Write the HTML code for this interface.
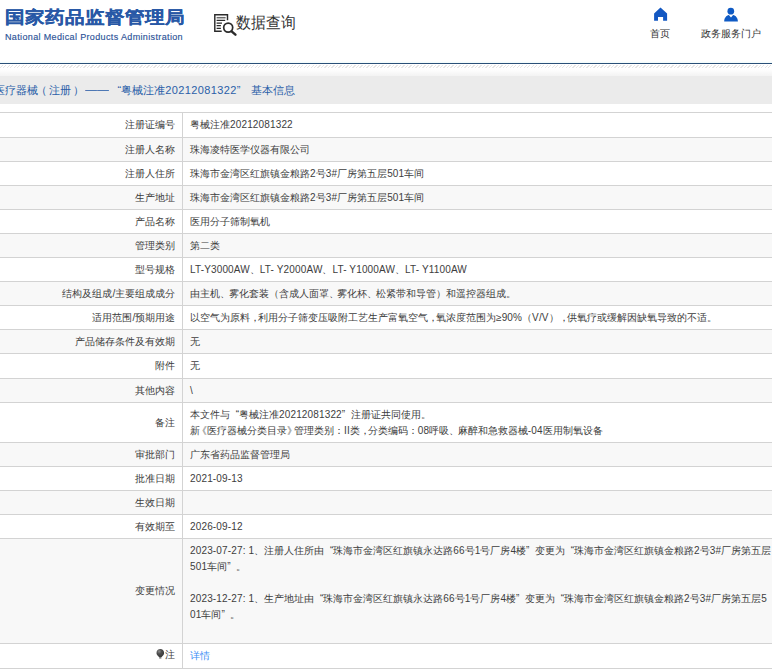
<!DOCTYPE html>
<html><head><meta charset="utf-8">
<style>
*{margin:0;padding:0;box-sizing:border-box}
html,body{width:772px;height:671px;overflow:hidden;background:#fff;font-family:"Liberation Sans",sans-serif;font-size:10px;color:#333}
.row{}
b,i{font-weight:normal;font-style:normal}
.logo-cn{position:absolute;left:5px;top:4px;font-size:19.8px;line-height:24px;font-weight:bold;color:#2858a6;white-space:nowrap;transform:scaleY(0.87);transform-origin:0 22px;-webkit-text-stroke:0.25px #2858a6}
.logo-en{position:absolute;left:5px;top:30.5px;font-size:9px;line-height:12px;letter-spacing:0.36px;color:#2d5398;white-space:nowrap;-webkit-text-stroke:0.15px #2d5398}
.sj{position:absolute;left:236px;top:12.5px;font-size:14.8px;line-height:20px;color:#333;white-space:nowrap;transform:scaleY(1.08);transform-origin:0 17px}
.nav{position:absolute;top:28px;font-size:10px;line-height:12px;color:#333;white-space:nowrap}
.bline{position:absolute;left:0;top:63px;width:772px;height:1px;background:#2a5078}
.hatch{position:absolute;left:0;top:64.5px;width:772px;height:3.8px;background:repeating-linear-gradient(135deg,#fff 0 1.5px,#e6e6e6 1.5px 2.47px)}
.cy{position:absolute;left:0;top:61px;width:772px;height:2px;background:linear-gradient(#fff,#eefafa)}
.grad{position:absolute;left:0;top:68.5px;width:772px;height:7.5px;background:linear-gradient(#fff,#f3f3f3)}
.title{position:absolute;left:-6px;top:76px;width:780px;height:28px;background:#ebebeb;color:#2a5ea8;font-size:11px;line-height:29px;white-space:nowrap}
.title .a{letter-spacing:0.4px}
.title .ql,.title .qr{width:11px}
.tpl,.tpr{display:inline-block;width:11px;white-space:nowrap}
.tpl{text-indent:-2px}
.tpr{text-indent:2px}
.dash{display:inline-block;position:relative;top:-1px;transform:scaleX(1.09);transform-origin:0 0}
.row{position:absolute;left:0;width:772px;border-top:1px solid #d3d3d3;border-bottom:1px solid #d3d3d3}
.lab{position:absolute;left:0;top:0;width:182px;padding-right:6.6px;text-align:right;display:flex;align-items:center;justify-content:flex-end;white-space:nowrap;color:#3d3d3d}
.val{position:absolute;left:182px;top:0;right:0;border-left:1px solid #d3d3d3;padding-left:7px;display:flex;align-items:center;white-space:nowrap;color:#3d3d3d;line-height:16px}
.a{letter-spacing:0.15px}
.ql,.qr{display:inline-block;width:9px;text-align:right}
.qr{text-align:left}
.bl,.br{display:inline-block;width:7px;overflow:visible;text-indent:-3px}
.br{text-indent:0}
.cm{display:inline-block;width:8px}
.dn{display:inline-block;width:8.5px}
.lnk{color:#3a8ef5}
.bulb{display:inline-block;vertical-align:-1px;margin-right:0.5px}
</style></head><body>
<div class="logo-cn">国家药品监督管理局</div>
<div class="logo-en">National Medical Products Administration</div>
<svg style="position:absolute;left:212px;top:12px" width="26" height="24" viewBox="0 0 26 24" fill="none" stroke="#2b2b2b">
<path d="M9.7 19.3H2.8V2.8H15.5V8.2" stroke-width="1.45"/>
<path d="M4.6 5.7H13.6" stroke="#6a6a6a" stroke-width="1.5"/>
<path d="M4.6 8.4H13.2M4.6 11.1H10M4.6 13.6H8.9M4.6 16.4H8.9" stroke-width="1.2"/>
<circle cx="16.2" cy="15.6" r="4.5" stroke-width="1.7"/>
<path d="M19.6 19.3L23.4 22.7" stroke-width="2.4" stroke-linecap="round"/>
</svg>
<div class="sj">数据查询</div>
<svg style="position:absolute;left:650px;top:4px" width="22" height="20" viewBox="650 4 22 20"><path d="M654.1 13.4L660.5 7.6L667.1 13.4V20.8H663.1V17.1H658V20.8H654.1Z" fill="#1458c2"/></svg>
<div class="nav" style="left:650px">首页</div>
<svg style="position:absolute;left:720px;top:4px" width="22" height="20" viewBox="0 0 22 20" fill="#0f5ac4"><circle cx="10.8" cy="7.2" r="3.35"/><path d="M4.2 17.6C4.2 14 6.3 11.5 8.9 11L11 13.4L13.1 11C15.7 11.5 17.9 14 17.9 17.6Z"/></svg>
<div class="nav" style="left:701px">政务服务门户</div>
<div class="cy"></div><div class="bline"></div>
<div class="hatch"></div>
<div class="grad"></div>
<div class="title">医疗器械<i class="tpl">（</i>注册<i class="tpr">）</i> <i class="dash">——</i> <i class="ql">“</i>粤械注准<b class="a">20212081322</b><i class="qr">”</i> 基本信息</div>
<div class="row" style="top:112px;height:26px;background:#fff"><div class="lab" style="height:24px"><div>注册证编号</div></div><div class="val" style="height:24px"><div>粤械注准<b class="a">20212081322</b></div></div></div>
<div class="row" style="top:137px;height:25px;background:#f8f8f8"><div class="lab" style="height:23px"><div>注册人名称</div></div><div class="val" style="height:23px"><div>珠海凌特医学仪器有限公司</div></div></div>
<div class="row" style="top:161px;height:25px;background:#fff"><div class="lab" style="height:23px"><div>注册人住所</div></div><div class="val" style="height:23px"><div>珠海市金湾区红旗镇金粮路<b class="a">2</b>号<b class="a">3#</b>厂房第五层<b class="a">501</b>车间</div></div></div>
<div class="row" style="top:185px;height:25px;background:#f8f8f8"><div class="lab" style="height:23px"><div>生产地址</div></div><div class="val" style="height:23px"><div>珠海市金湾区红旗镇金粮路<b class="a">2</b>号<b class="a">3#</b>厂房第五层<b class="a">501</b>车间</div></div></div>
<div class="row" style="top:209px;height:25px;background:#fff"><div class="lab" style="height:23px"><div>产品名称</div></div><div class="val" style="height:23px"><div>医用分子筛制氧机</div></div></div>
<div class="row" style="top:233px;height:25px;background:#f8f8f8"><div class="lab" style="height:23px"><div>管理类别</div></div><div class="val" style="height:23px"><div>第二类</div></div></div>
<div class="row" style="top:257px;height:25px;background:#fff"><div class="lab" style="height:23px"><div>型号规格</div></div><div class="val" style="height:23px"><div><b class="a">LT-Y3000AW</b>、<b class="a">LT- Y2000AW</b>、<b class="a">LT- Y1000AW</b>、<b class="a">LT- Y1100AW</b></div></div></div>
<div class="row" style="top:281px;height:25px;background:#f8f8f8"><div class="lab" style="height:23px"><div>结构及组成<b class="a">/</b>主要组成成分</div></div><div class="val" style="height:23px"><div>由主机<i class="dn">、</i>雾化套装（含成人面罩<i class="dn">、</i>雾化杯<i class="dn">、</i>松紧带和导管）和遥控器组成。</div></div></div>
<div class="row" style="top:305px;height:25px;background:#fff"><div class="lab" style="height:23px"><div>适用范围<b class="a">/</b>预期用途</div></div><div class="val" style="height:23px"><div>以空气为原料<i class="cm">，</i>利用分子筛变压吸附工艺生产富氧空气<i class="cm">，</i>氧浓度范围为<b class="a">≥90%</b>（<b class="a">V/V</b>）<i class="cm">，</i>供氧疗或缓解因缺氧导致的不适。</div></div></div>
<div class="row" style="top:329px;height:25px;background:#f8f8f8"><div class="lab" style="height:23px"><div>产品储存条件及有效期</div></div><div class="val" style="height:23px"><div>无</div></div></div>
<div class="row" style="top:353px;height:26px;background:#fff"><div class="lab" style="height:24px"><div>附件</div></div><div class="val" style="height:24px"><div>无</div></div></div>
<div class="row" style="top:378px;height:25px;background:#f8f8f8"><div class="lab" style="height:23px"><div>其他内容</div></div><div class="val" style="height:23px"><div><b class="a">\</b></div></div></div>
<div class="row" style="top:402px;height:41px;background:#fff"><div class="lab" style="height:39px"><div>备注</div></div><div class="val" style="height:39px"><div>本文件与<i class="ql">“</i>粤械注准<b class="a">20212081322</b><i class="qr">”</i>注册证共同使用。<br>新<i class="bl">《</i>医疗器械分类目录<i class="br">》</i>管理类别：<b class="a">II</b>类<i class="cm">，</i>分类编码：<b class="a">08</b>呼吸<i class="dn">、</i>麻醉和急救器械<b class="a">-04</b>医用制氧设备</div></div></div>
<div class="row" style="top:442px;height:25px;background:#f8f8f8"><div class="lab" style="height:23px"><div>审批部门</div></div><div class="val" style="height:23px"><div>广东省药品监督管理局</div></div></div>
<div class="row" style="top:466px;height:25px;background:#fff"><div class="lab" style="height:23px"><div>批准日期</div></div><div class="val" style="height:23px"><div><b class="a">2021-09-13</b></div></div></div>
<div class="row" style="top:490px;height:25px;background:#f8f8f8"><div class="lab" style="height:23px"><div>生效日期</div></div><div class="val" style="height:23px"><div>&nbsp;</div></div></div>
<div class="row" style="top:514px;height:25px;background:#fff"><div class="lab" style="height:23px"><div>有效期至</div></div><div class="val" style="height:23px"><div><b class="a">2026-09-12</b></div></div></div>
<div class="row" style="top:538px;height:106px;background:#f8f8f8"><div class="lab" style="height:104px"><div>变更情况</div></div><div class="val" style="height:104px"><div><b class="a">2023-07-27: 1</b>、注册人住所由<i class="ql">“</i>珠海市金湾区红旗镇永达路<b class="a">66</b>号<b class="a">1</b>号厂房<b class="a">4</b>楼<i class="qr">”</i>变更为<i class="ql">“</i>珠海市金湾区红旗镇金粮路<b class="a">2</b>号<b class="a">3#</b>厂房第五层<br><b class="a">501</b>车间<i class="qr">”</i>。<br>&nbsp;<br><b class="a">2023-12-27: 1</b>、生产地址由<i class="ql">“</i>珠海市金湾区红旗镇永达路<b class="a">66</b>号<b class="a">1</b>号厂房<b class="a">4</b>楼<i class="qr">”</i>变更为<i class="ql">“</i>珠海市金湾区红旗镇金粮路<b class="a">2</b>号<b class="a">3#</b>厂房第五层<b class="a">5</b><br><b class="a">01</b>车间<i class="qr">”</i>。<br>&nbsp;</div></div></div>
<div class="row" style="top:643px;height:26px;background:#fff"><div class="lab" style="height:24px"><div style="position:relative;top:-1px"><svg class="bulb" width="9" height="10" viewBox="0 0 9 10"><defs><radialGradient id="bg" cx="0.35" cy="0.3" r="0.7"><stop offset="0" stop-color="#8a8a8a"/><stop offset="0.45" stop-color="#4e4e4e"/><stop offset="1" stop-color="#3a3a3a"/></radialGradient></defs><path d="M4.3 0.1C6.4 0.1 8.1 1.8 8.1 3.9C8.1 5.4 7.3 6.3 6.5 7.1L5.7 7.9H2.9L2.1 7.1C1.3 6.3 0.5 5.4 0.5 3.9C0.5 1.8 2.2 0.1 4.3 0.1Z" fill="url(#bg)"/><rect x="3.2" y="8" width="2.2" height="1.6" fill="#777"/></svg>注</div></div><div class="val" style="height:24px"><div><span class="lnk">详情</span></div></div></div>
</body></html>
